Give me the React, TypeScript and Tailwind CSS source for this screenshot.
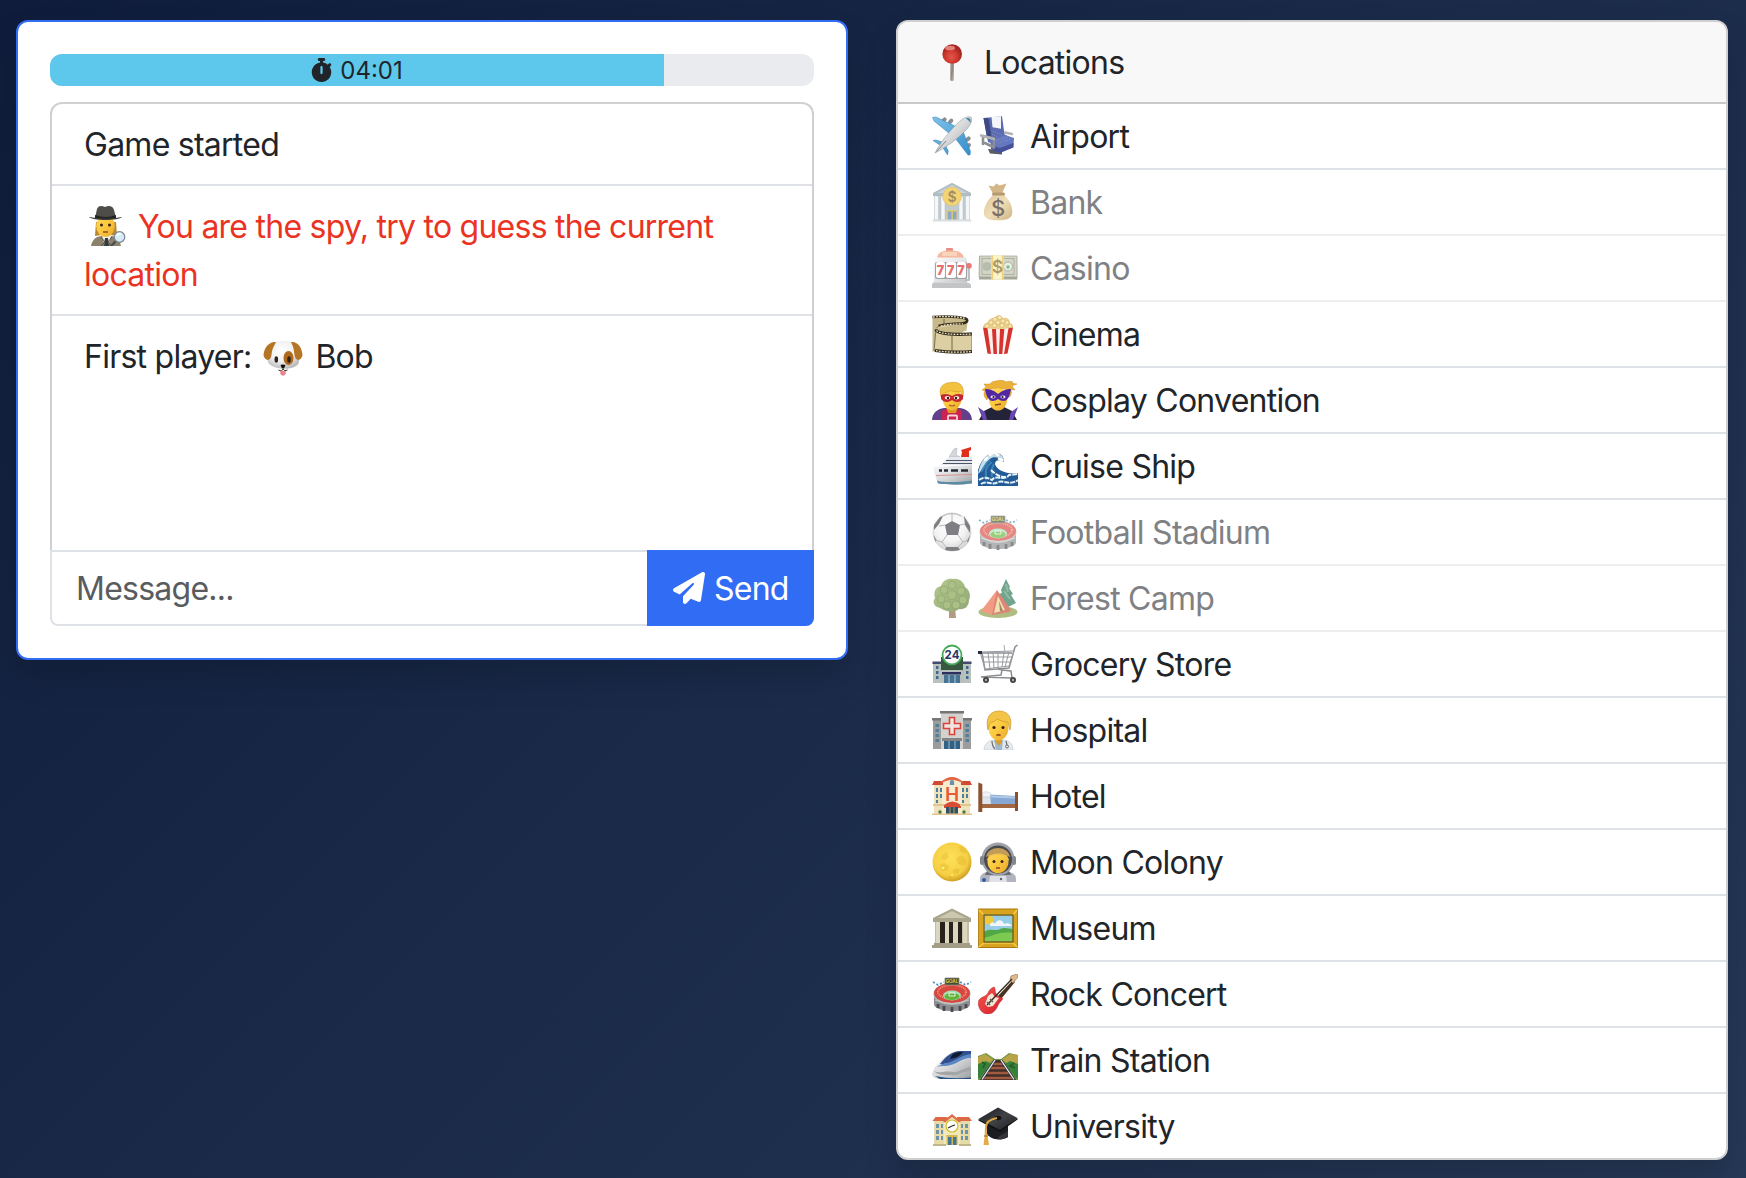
import type { ReactNode } from "react";
import { FaPaperPlane, FaStopwatch } from "react-icons/fa6";

const art: Record<string, ReactNode> = {
  pin: (
    <>
      <rect x="18.3" y="20" width="3.6" height="19" rx="1.6" fill="url(#steel)" />
      <circle cx="20.2" cy="12" r="9.8" fill="url(#redBall)" />
      <ellipse cx="18" cy="6" rx="5" ry="2.300" fill="#f7a79d" opacity=".7" />
    </>
  ),
  plane: (
    <>
      <g fill="#8b8f94">
        <rect x="10" y="1" width="4" height="6" rx="2" transform="rotate(45 12 4)" />
        <rect x="17" y="2.500" width="4" height="6" rx="2" transform="rotate(45 19 5)" />
        <rect x="34" y="20" width="4" height="6" rx="2" transform="rotate(45 36 23)" />
        <rect x="35" y="27" width="4" height="6" rx="2" transform="rotate(45 37 29)" />
      </g>
      <path d="M.5 1.500 4 1l21 10-7 7L2 5zM38.500 35.500 38 39l-2 0-13-17 8-7zM1 24.500l3-.5 9 3-2 4zM15.500 39l.8-4-4-8-3 2z" fill="url(#skyBlue)" stroke="#2d7fb5" strokeWidth=".5" />
      <path d="M3 37C8 27 18 14 28 5c4-3.500 8-5 11-4 2 3 0 7-4 12C26 23 13 32 3 37z" fill="url(#silver)" stroke="#8d9196" strokeWidth=".5" />
      <path d="M34 2.500c1.500-.6 3-.6 4 .2.800 1 .7 2.500.2 4-1.200-1.800-2.400-3-4.200-4.200z" fill="#3d85ad" />
      <path d="M4.500 35.500 14 25" stroke="#888" strokeWidth="1" />
    </>
  ),
  seat: (
    <>
      <path d="M10 33l14 1v4.500l-12-1z" fill="#5a5d66" />
      <path d="M5.500 2 24 .300l2.500 18L33 22l-11 8-12-4z" fill="#5a6bb0" />
      <path d="M5.500 2l5 .500L14 24l-5-2z" fill="#3c4985" />
      <path d="M13.500 1l9.500-.7v12.500l-8.500-1.500z" fill="#f4f5f8" />
      <path d="M12 24l15-5 9 3-.6 8.500L22 36l-9-5z" fill="#6577bd" />
      <path d="M13 29l9 3 13.500-5v4.500L22 37l-9-4z" fill="#43529a" />
      <path d="M15 15l9 4M14 18l6 3M16 25l14-4M20 27l13-4" stroke="#8997cf" strokeWidth="1" strokeDasharray="1 1.300" />
      <path d="M5 28V20l11 2.500v9L7 27" stroke="#8b8e95" strokeWidth="2.600" strokeLinecap="round" strokeLinejoin="round" fill="none" />
      <path d="M3 19.500l13 3.500M27 16.500l7 1.500" stroke="#b0b2b6" strokeWidth="2.400" strokeLinecap="round" />
    </>
  ),
  bank: (
    <>
      <path d="M3 11h34v28H3z" fill="#9eb1b8" />
      <path d="M1 11 20 .8 39 11v3H1z" fill="#869aa3" />
      <path d="M5 11 20 3l15 8z" fill="#aebfc5" />
      <g fill="#f1f4f6" stroke="#8d9ba3" strokeWidth=".5">
        <rect x="2.500" y="14" width="4" height="24" />
        <rect x="9" y="14" width="4" height="24" />
        <rect x="27" y="14" width="4" height="24" />
        <rect x="33.500" y="14" width="4" height="24" />
      </g>
      <rect x="14.500" y="28" width="11" height="10" fill="#d2ac34" />
      <path d="M15.800 29.500h3.700V38h-3.700zM20.800 29.500h3.700V38h-3.700z" fill="#527b9d" />
      <path d="M.8 37.500h38.400v2H.8z" fill="#c7cfd2" />
      <circle cx="20" cy="14.500" r="9.300" fill="#efbd28" stroke="#d69d19" strokeWidth=".7" />
      <text x="20" y="19.500" textAnchor="middle" fontSize="14" fontWeight="600" letterSpacing="0" fill="#775012">$</text>
    </>
  ),
  moneyBag: (
    <>
      <path d="M10.500 3.500l5 1 3-3 3 2 7-2-5 11h-8z" fill="#bf9048" />
      <path d="M16 12h9c4 4 9 9 9.300 17 .3 7-4 9.300-14.300 9.300S5 36 6 29c1-8 6-13 10-17z" fill="url(#sack)" />
      <rect x="14" y="10.500" width="13" height="3" rx="1.500" fill="#906324" />
      <text x="20" y="33.500" textAnchor="middle" fontSize="22" fontWeight="500" letterSpacing="0" fill="#362416">$</text>
    </>
  ),
  slot: (
    <>
      <rect x="14" y="0" width="7" height="4" rx="1" fill="#d95145" />
      <path d="M5 10c1-6 6-7.500 13-7.500S31 4 32 10z" fill="#f1936d" />
      <path d="M10 4h15v4H10z" fill="#f7bd95" />
      <path d="M3 9.500h31l2 8-1 17H2L1.500 18z" fill="url(#silver)" />
      <rect x="3" y="14" width="32" height="17" rx="2" fill="#6d7075" />
      <rect x="4" y="14" width="9" height="16" rx="2" fill="#fff" />
      <rect x="14" y="14" width="10" height="16" rx="2" fill="#fff" />
      <rect x="25" y="14" width="9" height="16" rx="2" fill="#fff" />
      <text x="20" y="26.500" textAnchor="middle" fontSize="12.500" letterSpacing="2.600" fontWeight="900" fill="#d7261e">777</text>
      <path d="M1 34.500h35l3 2V40H0v-3.500z" fill="#a2a5a8" />
      <path d="M37 19v13h-3" stroke="#85888c" strokeWidth="1.600" fill="none" />
      <circle cx="37" cy="17.800" r="2.800" fill="#df332c" />
    </>
  ),
  cash: (
    <>
      <path d="M1.500 8h37.500l.3 23.500H1z" fill="#777b63" />
      <path d="M1.500 8h37.500v21H1z" fill="#bcc0a7" stroke="#6b7058" strokeWidth=".7" />
      <rect x="4" y="10.500" width="32" height="16" fill="none" stroke="#787e66" strokeWidth=".8" />
      <circle cx="9" cy="18.500" r="4.500" fill="#929a80" />
      <circle cx="30" cy="18.500" r="4.500" fill="#e4e5d5" stroke="#7c8470" />
      <circle cx="30" cy="19" r="1.700" fill="#2f9a5a" />
      <path d="M13.500 7.200h12v24.500h-12z" fill="#f8efad" />
      <path d="M13.500 7.200h1.700v24.500h-1.700zM23.800 7.200h1.700v24.500h-1.700z" fill="#e7b936" />
      <text x="19.600" y="24.500" textAnchor="middle" fontSize="17" fontWeight="600" letterSpacing="0" fill="#856017">$</text>
    </>
  ),
  film: (
    <>
      <path d="M.5 3c14-1 25-.6 33 1.500 3 1 2 4 1 12L20 22 .5 38z" fill="#c8b98b" />
      <path d="M.5 3c14-1 25-.6 33 1.500 3.500 1.500 1.500 5-4 5-9 0-17 .8-23 2.500" fill="none" stroke="#322b1c" strokeWidth="2.600" />
      <path d="M5 14c0-3 14-3.500 24-3.500M4 15c0 4 18 5 36 4v19c-14 1-26 0-38-1z" fill="#ddcfa4" stroke="#5c4f2f" strokeWidth=".7" />
      <path d="M4 15.500c1 4.500 18 5.500 36 4.500M3 36.500c10 1.500 25 2 37 1" fill="none" stroke="#322b1c" strokeWidth="3.200" />
      <path d="M4.500 16.500c3 3.500 18 4.500 35.500 3.500M4 36.700c9 1.500 24 2 36 .8M1 3c14-1 25-.5 32 1.500M9 12c7-2 14-2 22-2.200" fill="none" stroke="#f2e9c7" strokeWidth="1.300" strokeDasharray="1.700 1.300" />
      <path d="M20 21v15M12 5v5" stroke="#5c4f2f" strokeWidth=".8" />
    </>
  ),
  popcorn: (
    <>
      <path d="M5 14c0-4 3-5 5-6 1-4 4-4 6-4 3-4.500 7-3 9 0 4-1 7 1 7 5 3 1 4 4 2 6l-15 4z" fill="#ead08c" />
      <g fill="#fbe8b4" stroke="#c79f4e" strokeWidth=".4">
        <circle cx="9" cy="12" r="2" /><circle cx="13" cy="8.500" r="2" /><circle cx="17" cy="5.500" r="2" /><circle cx="21.500" cy="3.500" r="2" /><circle cx="25" cy="7" r="2" /><circle cx="20" cy="8.500" r="2" /><circle cx="29" cy="8.500" r="2" /><circle cx="16.500" cy="11.500" r="2" /><circle cx="24" cy="11.500" r="2" /><circle cx="32" cy="12" r="1.800" />
      </g>
      <path d="M5 13.500q15 3.500 30 0L29.500 39.500q-9.500 1.500-20 0z" fill="#fdf1ec" />
      <path d="M5 13.500l4.500.8L13 40l-3.500-.5zM14 15h4l1 25h-3.500zM22 15h4.300l-2 25H21zM30.500 14.300l4.500-.8-5.500 26-3.500.5z" fill="#d6322f" />
    </>
  ),
  hero: (
    <>
      <path d="M0 40c.3-7 5-11 12-12h16c7 1 11.500 5 12 12z" fill="#63408a" />
      <path d="M10 31c3-3 17-3 20 0v9H9z" fill="#cd2351" />
      <path d="M14 27h12l-2 6h-8z" fill="#dc9826" />
      <ellipse cx="20" cy="18.500" rx="9.500" ry="11.500" fill="url(#skin)" />
      <path d="M9 17C6 7 11 3 19 2.500 28 1 33 6 31 17l-2.500-5.500c-5 .5-8-.5-10.500-1C17 12 13 12.500 11.500 13z" fill="#f2c13e" stroke="#c88d1e" strokeWidth=".5" />
      <path d="M9 15c4-2 8-1 11 1 3-2 7-3 11-1v4c-3 4-8 3.500-11 1-3 2.500-8 3-11-1z" fill="#c42833" />
      <ellipse cx="15.500" cy="17.800" rx="2.800" ry="1.700" fill="#fff0e4" /><ellipse cx="24.500" cy="17.800" rx="2.800" ry="1.700" fill="#fff0e4" />
      <circle cx="16" cy="18" r="1.200" fill="#31190e" /><circle cx="24" cy="18" r="1.200" fill="#31190e" />
      <path d="M17 25q3 2 6 0" stroke="#985522" strokeWidth="1.200" fill="none" />
      <rect x="16" y="35.500" width="9" height="5" rx="1" fill="none" stroke="#f6d7d9" strokeWidth="1.800" />
    </>
  ),
  villain: (
    <>
      <path d="M1 40l5-9 8-4h12l8 4 5 9z" fill="#23233a" />
      <path d="M0 27l7 5 2 8H5zM40 27l-7 5-2 8h4z" fill="#6a48b4" />
      <ellipse cx="20" cy="19" rx="9.300" ry="11.500" fill="url(#skin)" />
      <path d="M9 20C6 17 5 14 7 11L4 10l4-3-2-3 6 0c1-2 4-3 6-3 4-1 8-1 10 1 2-1 5-1 7 0l-2 1 6 1-5 2 3 4-4-.5c1 4 0 6-2 8l-3-8-8-2-8 2z" fill="#ecb238" stroke="#bd7f1a" strokeWidth=".4" />
      <path d="M7 9c4 0 9 1 13 5 5-4 9-5 13-5-1 5-2 11-7 12-3 0-4-1-6-2-2 1-3 2-6 2-4-1-6-6-7-12z" fill="#5128a2" />
      <ellipse cx="15" cy="17" rx="2.600" ry="1.400" fill="#efdff9" /><ellipse cx="25" cy="17" rx="2.600" ry="1.400" fill="#efdff9" />
      <circle cx="15.500" cy="17" r="1.100" fill="#222" /><circle cx="24.500" cy="17" r="1.100" fill="#222" />
      <path d="M17 25l6-1" stroke="#8b4c1d" strokeWidth="1.300" />
    </>
  ),
  ship: (
    <>
      <path d="M17 11l5-8 3-1-1 7 4 2z" fill="#d5d8dc" stroke="#a4a8ad" strokeWidth=".5" />
      <path d="M29 4l10-3v3l-2 1v6h-8l1-5z" fill="#df301d" />
      <path d="M11 17l6-6h23v8H8z" fill="#e6eaf0" />
      <path d="M14 14.500h26M11 17.500h29" stroke="#4c5561" strokeWidth="1.200" />
      <path d="M1 21l39-2v18c-13 3-24 2-34 0C4 32 2 27 1 21z" fill="url(#silver)" />
      <path d="M7 24.500h3m2 0h4m3 0h7m3 0h7" stroke="#242b36" strokeWidth="2.300" />
      <path d="M4 29.500l36-1" stroke="#d78a87" strokeWidth=".9" />
      <path d="M5 34.500c4 2 20 2 35 0v3c-12 1.500-25 1-34 0z" fill="#5d8ba3" />
    </>
  ),
  wave: (
    <>
      <path d="M0 40V24C4 12 10 7 17 7c7 0 9 4 9 9-5-3-9-2-9 2 1 6 13 11 23 9v13z" fill="#235b98" />
      <path d="M0 28C3 13 9 7 17 7c6 0 9 4 9 9-4-5-11-6-14-3C6 18 5 24 0 28z" fill="#c7dee9" />
      <path d="M3 26c4-5 4-9 9-12M8 34c0-9-2-12 6-18M14 31c-1-7 0-10 2-13" stroke="#3d84b6" strokeWidth="2" fill="none" />
      <path d="M1 34c6-4 9-2 13 0 4-6 12 2 17-5l9-1M3 38c6-4 11 2 17-2 7-2 12 4 20-2M13 24c5 5 9 7 15 7" stroke="#e7f4f8" strokeWidth="2" fill="none" strokeDasharray="5 1" />
      <path d="M12 9c2-2 6-2 8 0m1 4 3 1M7 14l2-2" stroke="#fff" strokeWidth="2.500" strokeLinecap="round" />
    </>
  ),
  ball: (
    <>
      <circle cx="20" cy="20" r="19" fill="url(#whiteBall)" stroke="#999" strokeWidth=".5" />
      <path d="M13 13l7-4 8 4-2 10H15zM2 13l6-8 3-1-4 8-5 6zM32 4l6 10v7l-5-8zM14 35h12l2 3q-8 2-15 0zM1.500 23l3 5-1 2zM38 23l-3 6 1 2z" fill="#3b3c41" />
      <path d="M20 9V2M13 13l-6 1M28 13l5-1M15 23l-5 7 4 5M26 23l5 7-5 5M10 30l-7-2M31 30l5-2M11 4q9-5 18 0" stroke="#85888b" fill="none" strokeWidth=".9" />
    </>
  ),
  stadium: (
    <>
      <path d="M2 20h36v11c-4 8-32 8-36 0z" fill="#8b8d90" />
      <ellipse cx="20" cy="20" rx="18.500" ry="11" fill="#b5b6b9" />
      <ellipse cx="20" cy="19" rx="18" ry="10" fill="#d8473e" />
      <ellipse cx="20" cy="18" rx="14" ry="7" fill="none" stroke="#f29785" strokeWidth="2" strokeDasharray="1 1" />
      <ellipse cx="20" cy="21.500" rx="9" ry="5" fill="#a6ddb3" />
      <ellipse cx="20" cy="22.500" rx="7.500" ry="3.600" fill="#62b53a" />
      <path d="M17 19h6v3h-6z" fill="none" stroke="#fff" strokeWidth=".8" />
      <path d="M13 4h14v7H13z" fill="#494b38" stroke="#868775" strokeWidth=".8" />
      <text x="20" y="9.300" textAnchor="middle" fontSize="4.500" fontWeight="700" letterSpacing="0" fill="#d5ca42">GOAL</text>
      <path d="M1 8l5 3 6-3m16 0 6 3 5-3" stroke="#4790c1" strokeWidth="1.800" strokeDasharray="2 2" fill="none" />
      <path d="M3 26q17 7 34 0" stroke="#c8c9ca" strokeWidth="1" fill="none" />
      <path d="M6 30v4m6-2v5m8-4v5m8-6v5m6-7v4" stroke="#4b4c50" strokeWidth="2.800" />
    </>
  ),
  tree: (
    <>
      <path d="M17 29h6l1 11h-7z" fill="#90653d" />
      <path d="M8 30C2 29 0 24 3 20c-2-7 1-11 6-12C11 2 16 0 21 1c7-1 11 4 12 8 5 3 6 9 4 13 0 7-5 10-10 9-6 4-13 3-19-1z" fill="url(#leaf)" />
      <g fill="#7f9f43" stroke="#4d6d24" strokeWidth=".6">
        <circle cx="12" cy="12" r="4" /><circle cx="20" cy="7" r="4" /><circle cx="29" cy="13" r="4" /><circle cx="20" cy="17" r="4.500" /><circle cx="9" cy="21" r="4" /><circle cx="31" cy="22" r="4" /><circle cx="15" cy="27" r="4" /><circle cx="24" cy="27" r="4" />
      </g>
    </>
  ),
  tent: (
    <>
      <ellipse cx="20" cy="34" rx="19.500" ry="6" fill="#839a3f" />
      <path d="M28 1l4 8-1 1 4 6-2 1 5 8-8 4-8-3-1-10 3-1-1-3z" fill="#287452" />
      <path d="M28 6l2 8m-4-1 6 8" stroke="#589c73" strokeWidth="2" />
      <path d="M19 12 3 33l11 4 5-18z" fill="#ec6643" />
      <path d="M19 12l-5 25 17-3 2-2z" fill="#cf442f" />
      <path d="M20 18l-4 17 11-3z" fill="#e9d286" />
      <path d="M21 23l1 10h3z" fill="#71441c" />
    </>
  ),
  store: (
    <>
      <path d="M1 18h10v21H1zM29 18h10v21H29z" fill="#b9c1bd" />
      <path d="M.5 17.500h39v2.500H.500z" fill="#45496f" />
      <path d="M9 13h22v17H9z" fill="#36583e" />
      <path d="M8 26h24v13H8z" fill="#b7bfbe" />
      <path d="M10 28h19v2.500H10z" fill="#29305d" />
      <path d="M12 31h16v8H12z" fill="#467394" />
      <path d="M17 31v8m6-8v8" stroke="#b4cbd6" />
      <g fill="#3c6a90"><path d="M4 22h2.500v3H4zM4 27h2.500v3H4zM4 32h2.500v3H4zM34 22h2.500v3H34zM34 27h2.500v3H34zM34 32h2.500v3H34z" /></g>
      <circle cx="20" cy="11" r="9.500" fill="#fff" stroke="#47aa5a" strokeWidth="1.800" />
      <text x="20" y="15.200" textAnchor="middle" fontSize="11.500" fontWeight="700" letterSpacing="0" fill="#293767">24</text>
    </>
  ),
  cart: (
    <>
      <path d="M39.500 1 37 3 31 24 7 26 4 9h30" fill="none" stroke="#8b8d91" strokeWidth="1.500" />
      <path d="M2 8l34-1-5 15-24 3zM4 13h30M5 18h27M10 8l2 17M15 8l1 16M20 8v16M26 8l-2 15M31 8l-4 15" fill="none" stroke="#9a9ca0" strokeWidth="1" />
      <path d="M26 1l1 8" stroke="#aaa" strokeWidth="1" />
      <path d="M20 25l4 1-1 5-20 2 31 1-1-7-9-1" fill="none" stroke="#8c8e92" strokeWidth="1.500" />
      <path d="M0 7h4v3H0z" fill="#262d3c" />
      <circle cx="8" cy="36" r="3" fill="#484044" /><circle cx="35" cy="36" r="3" fill="#484044" />
      <circle cx="8" cy="36" r="1.200" fill="#aaa" /><circle cx="35" cy="36" r="1.200" fill="#aaa" />
    </>
  ),
  hospital: (
    <>
      <path d="M1 9h38v30H1z" fill="#9b9d9d" />
      <path d="M0 8h10v2.500H0zM31 8h9v2.500h-9z" fill="#747677" />
      <path d="M9 2h22v37H9z" fill="#d3d2ce" />
      <path d="M8 1h24v2.500H8z" fill="#747573" />
      <path d="M3.500 14h3.500v3H3.500zM3.500 19h3.500v3H3.500zM3.500 24h3.500v3H3.500zM3.500 29h3.500v3H3.500zM33.500 14H37v3h-3.500zM33.500 19H37v3h-3.500zM33.500 24H37v3h-3.500zM33.500 29H37v3h-3.500z" fill="#4f7f9c" />
      <path d="M10 28h20v3H10z" fill="#828485" />
      <path d="M12 31h16v8H12z" fill="#306287" /><path d="M17 31v8m6-8v8" stroke="#a9bac2" />
      <path d="M17.500 7.500h5v6h6v5h-6v6h-5v-6h-6v-5h6z" fill="#efe6e2" stroke="#dd4239" strokeWidth="1.600" />
    </>
  ),
  doctor: (
    <>
      <path d="M6 40c0-6 4-9 9-10h11c6 1 9 4 9 10z" fill="#e6eaec" stroke="#b9bfc3" strokeWidth=".5" />
      <path d="M16 30h9l-1 10h-6z" fill="#9db9d0" />
      <path d="M17.500 27h6.500v5l-3 4-3.500-4z" fill="#dc9c2a" />
      <ellipse cx="20.500" cy="18" rx="10" ry="12.500" fill="url(#skin)" />
      <path d="M10 20C7 8 12 1 21 1c9 0 14 6 11 19l-2.500-8c-5 0-8-2-10.500-3-1.500 2.500-6 3-7.500 5z" fill="#f3c445" stroke="#c88d1e" strokeWidth=".6" />
      <circle cx="16" cy="17.500" r="1.600" fill="#362015" /><circle cx="25" cy="17.500" r="1.600" fill="#362015" />
      <path d="M18.500 25.500q2-1.500 4 0" stroke="#843b21" strokeWidth="1.600" fill="none" />
      <path d="M14 31q0 5 3 8M28 31l1 4" stroke="#686c72" strokeWidth="1.200" fill="none" /><circle cx="29" cy="36.500" r="1.500" fill="none" stroke="#696d74" />
    </>
  ),
  hotel: (
    <>
      <path d="M2 7h36v31H2z" fill="#eee2bd" />
      <path d="M10 7q10-11 20 0v32H10z" fill="#f6ecd0" />
      <path d="M0 9l2-4h9v4zM29 5h9l2 4H29z" fill="#cf4a32" />
      <path d="M9 6q11-10 22 0l1 2q-12-8-24 0z" fill="#e36643" />
      <path d="M20 4c3 0 2 5 2 5h-4s-1-5 2-5z" fill="#6b8eac" />
      <path d="M4 12h2v4H4zM8 12h2v4H8zM4 18h2v4H4zM8 18h2v4H8zM4 24h2v3H4zM30 12h2v4h-2zM34 12h2v4h-2zM30 18h2v4h-2zM34 18h2v4h-2zM30 24h2v3h-2z" fill="#527e9e" />
      <text x="20" y="25" textAnchor="middle" fontSize="19" fontWeight="600" letterSpacing="0" fill="#e85a35">H</text>
      <path d="M12 29q8-7 17 0v3H12z" fill="#d94e33" />
      <path d="M14 31h12v8H14z" fill="#2f536b" /><path d="M18 31v8m4-8v8" stroke="#b69855" />
      <path d="M1 28h11v2H1zM28 28h11v2H28zM0 37.500h40V39H0z" fill="#e3c590" />
      <circle cx="8" cy="36" r="1.700" fill="#457e3b" /><circle cx="32" cy="36" r="1.700" fill="#457e3b" />
    </>
  ),
  bed: (
    <>
      <path d="M4 26h34v6H4z" fill="#a36841" />
      <path d="M3 18l34 2v8H3z" fill="#86a8d4" />
      <path d="M3 19h9l1 9H3z" fill="#dde4ee" />
      <path d="M4 18c2-3 6-3 9 0l-1 3H4z" fill="#f0f3f7" stroke="#b6c1cf" strokeWidth=".5" />
      <path d="M13 20.500l24 1" stroke="#b1c8e6" strokeWidth="2" />
      <path d="M.3 6.500l4 1.500v28H.300z" fill="#8c5331" />
      <path d="M37 16h3v19h-3z" fill="#8b5130" />
    </>
  ),
  moon: (
    <>
      <circle cx="20" cy="20" r="19.500" fill="url(#moonGlow)" />
      <path d="M27 5c3-2 7 1 8 5-2 3-5 0-7-1zM11 12l4-2 2 5-4 3-4-2zM24 16l6-3 5 6-2 5-7-2zM8 23l4-2 5 3-1 4-6 1zM21 28l4-2 3 2-2 4-5-1zM16 34l3-1 2 2-3 2z" fill="#d7a725" opacity=".28" />
      <circle cx="11" cy="26" r="1.300" fill="#fff06f" /><circle cx="20" cy="33" r="1" fill="#fff06f" />
    </>
  ),
  astronaut: (
    <>
      <path d="M2 40q-1-8 6-10h24q7 2 6 10z" fill="#b1b4be" />
      <path d="M9 29h22l2 4H7z" fill="#686b75" />
      <circle cx="20" cy="17" r="16.500" fill="#9fa3a9" /><circle cx="20" cy="17.500" r="14" fill="#494a4e" />
      <ellipse cx="20" cy="19.500" rx="10.500" ry="11.500" fill="url(#skin)" />
      <path d="M8 15C10 3 30 3 32 15l-5-2-7-1-7 1z" fill="#c29c58" />
      <path d="M9 19C9 9 31 9 31 19l-4-5-7-1.500-7 1.500z" fill="#efc052" />
      <rect x="2" y="14" width="4" height="9" rx="2" fill="#83868b" /><rect x="34" y="14" width="4" height="9" rx="2" fill="#83868b" />
      <circle cx="16" cy="19.500" r="1.500" fill="#3d2415" /><circle cx="24" cy="19.500" r="1.500" fill="#3d2415" />
      <path d="M18 26h4" stroke="#964626" strokeWidth="1.500" />
      <path d="M12 34h16l1 6H11z" fill="#dfe1e6" /><circle cx="6" cy="38" r="2" fill="#315ba3" /><circle cx="23" cy="37" r="1.200" fill="#5b6270" />
    </>
  ),
  museum: (
    <>
      <path d="M3 13h34v23H3z" fill="#c5bea4" />
      <path d="M1 10 20 .500 39 10v4H1z" fill="#aaa68d" /><path d="M6 10 20 3l14 7z" fill="#ccc7ae" />
      <path d="M8 14h5v22H8zM17 14h4v22h-4zM26 14h4v22h-4z" fill="#29221c" />
      <path d="M4 14h4v22H4zM13 14h4v22h-4zM21 14h5v22h-5zM31 14h4v22h-4z" fill="#dbd6c0" />
      <path d="M2 35h36v2H2zM0 37h40v3H0z" fill="#a39d87" />
    </>
  ),
  picture: (
    <>
      <path d="M.3 1h39.400v38.500H.300z" fill="#d8a31f" stroke="#ad780e" />
      <path d="M1 2l5 5h29l4-5M6 7v28l-5 4m5-4h29l4 4" fill="none" stroke="#f2d04a" strokeWidth="1.500" />
      <path d="M6 7h29v27H6z" fill="#97cde6" />
      <path d="M6 24c6-5 12 0 16-3 5-2 9 0 13 0v13H6z" fill="#50a845" />
      <path d="M6 30c9-2 15-7 29-5v9H6z" fill="#7dc952" />
      <circle cx="11" cy="12" r="4.500" fill="#efcb3c" />
      <path d="M12 17c0-3 4-3 5-1 2-6 8-4 9 0 4-2 7 0 8 2H12z" fill="#f1f6fa" />
      <path d="M6 7h29v27H6z" fill="none" stroke="#76621a" strokeWidth="1.400" />
    </>
  ),
  guitar: (
    <>
      <path d="M20 22 35 6l2 2-14 17z" fill="#463322" />
      <path d="M32 6l1-4 6-2 1 3-5 6z" fill="#ddb98c" stroke="#9b7951" strokeWidth=".7" />
      <path d="M1 26c3-4 7-3 9-7 1-3 3-5 6-6 2 1 0 4 3 8 3 4 7 1 5 5-4 4-4 6-6 9-4 7-14 7-17-2-1-3-1-5 0-7z" fill="url(#redBody)" stroke="#af2028" strokeWidth=".5" />
      <path d="M10 22l4-3 3 4 4 1-6 8-5 1-3-3z" fill="#efe6d5" />
      <path d="M9 31 34 5" stroke="#3a2b20" strokeWidth="1.400" />
      <path d="M9 28l3 3m0-6 3 3" stroke="#615d5a" strokeWidth="1.400" />
    </>
  ),
  train: (
    <>
      <path d="M1 31C6 22 16 12 25 11h14v28H6c-6-2-7-4-5-8z" fill="url(#silver)" />
      <path d="M8 24C14 16 21 11 28 11h11v5C28 16 22 24 12 25z" fill="#2f4f8f" />
      <path d="M13 23c6 1 15-8 26-9v4c-11 0-14 8-28 8-5 0-8 1-9 2z" fill="#5c87c4" />
      <path d="M20 15c3-3 7-3 11-3-3 4-7 6-13 7z" fill="#111b2b" />
      <path d="M2 31c5 3 12-1 19 1 5 1 10-4 18-5v4c-9 0-12 5-20 4-8 0-14 0-17-4z" fill="#a3a4a5" />
      <path d="M3 36q16 3.500 36 1.500V39H8z" fill="#295084" />
    </>
  ),
  tracks: (
    <>
      <path d="M0 16l8-3 9 6h6l8-6 9 2v25H0z" fill="#6f9546" />
      <path d="M0 17l7-3 9 6L0 28zM40 15l-8-1-9 6 17 8z" fill="#b9a548" />
      <path d="M0 24l8-3 5 3L2 38H0zM40 24l-8-3-5 3 11 14h2z" fill="#37813b" />
      <path d="M16 20h8l14 20H2z" fill="#3f2f28" />
      <path d="M14 24h12M12 28h17M9 33h22M5 38h31" stroke="#a35a40" strokeWidth="2.600" />
      <path d="M17 20 3.500 40M23 20l13.500 20" stroke="#2f3640" strokeWidth="2.600" /><path d="M17 20 4 39.500M23 20l13 19.500" stroke="#eceff1" strokeWidth="1.300" />
      <path d="M4 22l3 2-2 4m31-5-4 3 5 2" stroke="#265e2a" strokeWidth="1.800" fill="none" />
    </>
  ),
  school: (
    <>
      <path d="M2 14h36v25H2z" fill="#e7dba8" />
      <path d="M.5 15l3-4h12v4zM25 11h12l3 4H25z" fill="#db6a45" />
      <path d="M12 17l8-8 8 8v22H12z" fill="#f3e8b8" />
      <path d="M11 15.500 20 8l9 7.500-2 1-7-5.500-7 5.500z" fill="#de6c48" />
      <path d="M4 18h3v4H4zM9 18h2v4H9zM29 18h2v4h-2zM33 18h3v4h-3zM4 24h3v4H4zM9 24h2v4H9zM29 24h2v4h-2zM33 24h3v4h-3zM4 30h3v4H4zM9 30h2v4H9zM29 30h2v4h-2zM33 30h3v4h-3z" fill="#6f93a8" />
      <circle cx="20" cy="20" r="6" fill="#fff" stroke="#cebb2b" strokeWidth="1.200" />
      <path d="M20 20l-4 2m4-2 3-1" stroke="#282925" strokeWidth="1.100" />
      <path d="M14.500 29h11v10h-11z" fill="#d5b850" /><path d="M16 31h3.500v8H16zM21 31h3.500v8H21z" fill="#427598" />
      <path d="M1 38h13v2H1zM27 38h12v2H27z" fill="#bfb68c" />
    </>
  ),
  cap: (
    <>
      <path d="M9 18v10c4 6 14 7 21 3V19z" fill="#1c1d20" />
      <path d="M20 31l10-6v6c-3 2-7 3-10 2z" fill="#333437" />
      <path d="M.5 13 20 1.500 39.500 12 22 25z" fill="url(#capTop)" />
      <path d="M.5 13 22 24 39.500 12v1.500L22 26 .500 14.500z" fill="#0f1012" />
      <ellipse cx="20" cy="12" rx="3.500" ry="2.200" fill="#131416" />
      <path d="M19 12q-11 2-11 9l-.3 8" fill="none" stroke="#dba43d" strokeWidth="2" />
      <path d="M7 27l2 0 2 12H5.500z" fill="#e4ab46" /><path d="M6 30h4" stroke="#906016" />
    </>
  ),
  spy: (
    <>
      <path d="M3 40c1-6 5-10 11-10h9c6 0 9 5 10 10z" fill="#8c826b" />
      <path d="M14 30h9l-3 10h-3z" fill="#f1f1ef" /><path d="M17 32h3l1 8h-5z" fill="#343942" />
      <path d="M8 16h20l1 14-6-1H13l-6 1z" fill="#b98630" />
      <ellipse cx="17.500" cy="20" rx="9.300" ry="11" fill="url(#skin)" />
      <path d="M7 12 9 3c2-4 5-3 8-2 4-2 8-1 9 3l2 8z" fill="#4f4d49" />
      <path d="M7 9q11 4 21 0v4H7z" fill="#242425" />
      <path d="M1 11q17 3 33 0c-3 4-30 4-33 0z" fill="#3b3a38" />
      <circle cx="13.500" cy="19" r="1.500" fill="#3a2416" /><circle cx="21.500" cy="19" r="1.500" fill="#3a2416" />
      <path d="M15 26h5" stroke="#8c4323" strokeWidth="1.400" />
      <path d="M28 35l-5 5" stroke="#4b4b4f" strokeWidth="2.300" />
      <circle cx="31.500" cy="31" r="5.300" fill="#d7eaf6" stroke="#7a8790" strokeWidth="1.200" /><path d="M29 30q1-3 4-2" stroke="#fff" strokeWidth="1.500" fill="none" />
      <path d="M13 31l4 5-4 4M24 31l-4 5 3 4" fill="none" stroke="#565445" strokeWidth="1" />
    </>
  ),
  dog: (
    <>
      <path d="M11 6C15 3 26 3 30 6c4 6 7 13 6 19-1 9-27 9-31 0-1-5 2-13 6-19z" fill="url(#whiteBall)" />
      <path d="M13 5C6 4 1 11 .500 18c1 6 7 7 8 0C9 12 11 9 13 5zM28 5c7-1 11 6 11.500 13-1 6-7 7-8 0C31 12 30 9 28 5z" fill="#b67524" />
      <ellipse cx="25.500" cy="21" rx="5" ry="7" fill="#af681c" />
      <ellipse cx="13.300" cy="22.500" rx="1.800" ry="3.200" fill="#30231b" /><ellipse cx="26" cy="22.500" rx="1.800" ry="3.200" fill="#30231b" />
      <path d="M17.500 28q2.500-1 5 0l-1.300 3h-2.400z" fill="#111" /><path d="M20 31v2m-4.500 0q3.500 2 4.500-1 1.500 3 4.500 1" stroke="#413326" fill="none" />
      <path d="M17.300 34h5.400v3q-2.700 3.500-5.400 0z" fill="#e88390" />
    </>
  ),
};

const stops: [string, string[]][] = [
  ["steel", ["#a9a19a", "#8e8680", "#c4bcb4"]],
  ["skyBlue", ["#7fc2ea", "#358fca"]],
  ["silver", ["#fbfbfc", "#d6d8da", "#9b9ea2"]],
  ["sack", ["#cfa866", "#e6cd91", "#b98c43"]],
  ["skin", ["#ffdb5e", "#fbc93f", "#e9a62c"]],
  ["leaf", ["#93ae50", "#54792e"]],
  ["redBody", ["#f4584d", "#d61e2b"]],
  ["capTop", ["#17181a", "#414246", "#1b1c1e"]],
];

function Gradients() {
  return (
    <svg className="absolute size-0" aria-hidden="true">
      <defs>
        {stops.map(([id, colors]) => (
          <linearGradient key={id} id={id} x1="0" y1="0" x2="1" y2="1">
            {colors.map((c, i) => (
              <stop key={i} offset={i / (colors.length - 1)} stopColor={c} />
            ))}
          </linearGradient>
        ))}
        <radialGradient id="redBall" cx=".45" cy=".65">
          <stop offset="0" stopColor="#e0574a" /><stop offset=".6" stopColor="#d23a31" /><stop offset="1" stopColor="#a92722" />
        </radialGradient>
        <radialGradient id="whiteBall" cx=".45" cy=".35" r=".65">
          <stop offset="0" stopColor="#fff" /><stop offset=".6" stopColor="#f0f0f0" /><stop offset="1" stopColor="#bcbcbe" />
        </radialGradient>
        <radialGradient id="moonGlow" cx=".45" cy=".4" r=".6">
          <stop offset="0" stopColor="#fee158" /><stop offset=".75" stopColor="#f5cf43" /><stop offset="1" stopColor="#cf9f24" />
        </radialGradient>
      </defs>
    </svg>
  );
}

function Emoji({ name, className = "" }: { name: string; className?: string }) {
  return (
    <svg viewBox="0 0 40 40" className={`size-10 shrink-0 overflow-hidden ${className}`} aria-hidden="true">
      {art[name]}
    </svg>
  );
}

const locations: { name: string; icons: [string, string]; out?: boolean }[] = [
  { name: "Airport", icons: ["plane", "seat"] },
  { name: "Bank", icons: ["bank", "moneyBag"], out: true },
  { name: "Casino", icons: ["slot", "cash"], out: true },
  { name: "Cinema", icons: ["film", "popcorn"] },
  { name: "Cosplay Convention", icons: ["hero", "villain"] },
  { name: "Cruise Ship", icons: ["ship", "wave"] },
  { name: "Football Stadium", icons: ["ball", "stadium"], out: true },
  { name: "Forest Camp", icons: ["tree", "tent"], out: true },
  { name: "Grocery Store", icons: ["store", "cart"] },
  { name: "Hospital", icons: ["hospital", "doctor"] },
  { name: "Hotel", icons: ["hotel", "bed"] },
  { name: "Moon Colony", icons: ["moon", "astronaut"] },
  { name: "Museum", icons: ["museum", "picture"] },
  { name: "Rock Concert", icons: ["stadium", "guitar"] },
  { name: "Train Station", icons: ["train", "tracks"] },
  { name: "University", icons: ["school", "cap"] },
];

function ChatCard() {
  return (
    <section className="flex h-[640px] w-[832px] flex-col rounded-xl border-2 border-[#316cf4] bg-white p-8 shadow-[0_16px_32px_rgba(0,0,0,0.15)]">
      <div className="flex h-8 overflow-hidden rounded-xl bg-[#eaebef]">
        <div className="flex w-[614px] items-center justify-center gap-2 bg-[#5dc8ec] text-2xl tracking-normal">
          <FaStopwatch className="h-6 w-[21px]" />
          <span className="pt-px">04:01</span>
        </div>
      </div>
      <div className="mt-4 h-[448px] rounded-t-xl border-2 border-b-0 border-[#d0d0d0]">
        <div className="border-b-2 border-[#dee2e6] px-8 pt-[17px] pb-[15px]">Game started</div>
        <div className="border-b-2 border-[#dee2e6] px-8 pt-[17px] pb-[15px] text-[#eb3323]">
          <Emoji name="spy" className="mr-[10px] ml-1 inline-block align-[-8px]" />
          You are the spy, try to guess the current location
        </div>
        <div className="flex items-center px-8 pt-[17px] pb-[15px]">
          First player:
          <Emoji name="dog" className="mr-3 ml-3" />
          Bob
        </div>
      </div>
      <form className="flex h-[76px]" onSubmit={(e) => e.preventDefault()}>
        <input
          className="min-w-0 flex-1 rounded-bl-lg border-2 border-r-0 border-[#dee2e6] px-6 pt-0.5 tracking-[inherit] outline-none placeholder:text-[#595c5f]"
          placeholder="Message..."
        />
        <button className="flex w-[167px] items-center gap-[9px] rounded-br-lg bg-[#316cf4] pl-[26px] tracking-[inherit] text-white">
          <FaPaperPlane className="size-8" />
          <span className="pt-0.5">Send</span>
        </button>
      </form>
    </section>
  );
}

function LocationsCard() {
  return (
    <section className="h-[1140px] w-[832px] overflow-hidden rounded-xl border-2 border-[#cfcfcf] bg-white shadow-[0_16px_32px_rgba(0,0,0,0.15)]">
      <header className="flex h-[82px] items-center border-b-2 border-[#c9c9c9] bg-[#f8f8f8] pl-[34px]">
        <Emoji name="pin" className="mr-3" />
        <span className="pt-0.5">Locations</span>
      </header>
      <ul>
        {locations.map(({ name, icons, out }) => (
          <li
            key={name}
            className={`flex h-[66px] items-center border-b-2 pl-[34px] last:border-b-0 last:pb-0.5 ${out ? "border-[#eeeeee]" : "border-[#dee2e6]"}`}
          >
            <div className={`flex gap-1.5 ${out ? "opacity-65" : ""}`}>
              <Emoji name={icons[0]} />
              <Emoji name={icons[1]} />
            </div>
            <span className={`ml-3 pt-0.5 ${out ? "text-[#7f8184]" : ""}`}>{name}</span>
          </li>
        ))}
      </ul>
    </section>
  );
}

export default function App() {
  return (
    <main className="flex h-[1178px] w-[1746px] items-start gap-12 overflow-hidden bg-linear-[135deg,#0f1c3b,#253856] pt-5 pl-4 font-['Inter',sans-serif] text-[32px]/[48px] tracking-[-0.75px] text-[#212529]">
      <Gradients />
      <ChatCard />
      <LocationsCard />
    </main>
  );
}
